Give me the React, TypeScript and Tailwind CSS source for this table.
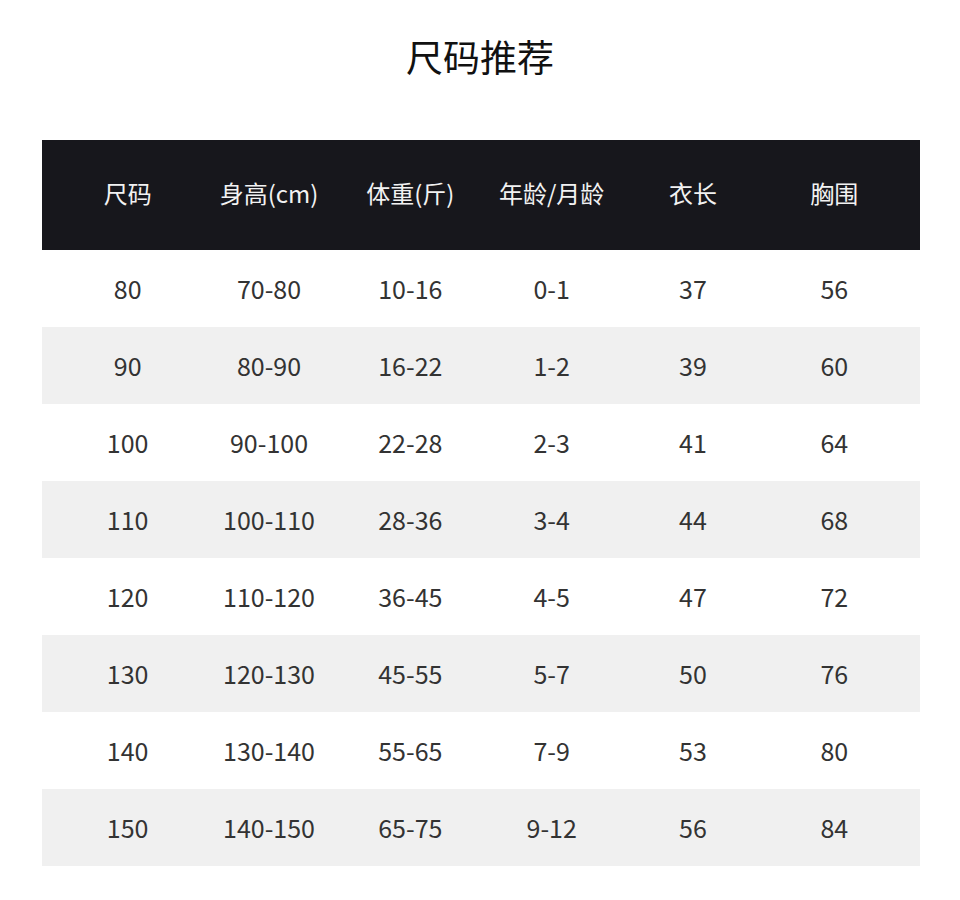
const headers = ['尺码', '身高(cm)', '体重(斤)', '年龄/月龄', '衣长', '胸围'];

const rows = [
  ['80', '70-80', '10-16', '0-1', '37', '56'],
  ['90', '80-90', '16-22', '1-2', '39', '60'],
  ['100', '90-100', '22-28', '2-3', '41', '64'],
  ['110', '100-110', '28-36', '3-4', '44', '68'],
  ['120', '110-120', '36-45', '4-5', '47', '72'],
  ['130', '120-130', '45-55', '5-7', '50', '76'],
  ['140', '130-140', '55-65', '7-9', '53', '80'],
  ['150', '140-150', '65-75', '9-12', '56', '84'],
];

export default function App() {
  return (
    <div
      className="w-[960px] h-[900px] bg-white"
      style={{ fontFamily: '"Noto Sans CJK SC", "Noto Sans", sans-serif' }}
    >
      {/* Title */}
      <div className="pt-[32px] text-center text-[37px] leading-[48px] text-[#111]">
        尺码推荐
      </div>

      {/* Table */}
      <div className="mt-[60px] ml-[42px] w-[878px]">
        <div className="grid grid-cols-6 px-[15px] pb-[5px] h-[110px] items-center bg-[#17171c] text-[#f2f2f2] text-[24px]">
          {headers.map((h) => (
            <div key={h} className="text-center">
              {h}
            </div>
          ))}
        </div>
        {rows.map((row, i) => (
          <div
            key={row[0]}
            className={`grid grid-cols-6 px-[15px] h-[77px] items-center text-[25px] text-[#333] ${i % 2 === 1 ? 'bg-[#f0f0f0]' : 'bg-white'}`}
          >
            {row.map((cell, j) => (
              <div key={j} className="text-center">
                {cell}
              </div>
            ))}
          </div>
        ))}
      </div>
    </div>
  );
}
